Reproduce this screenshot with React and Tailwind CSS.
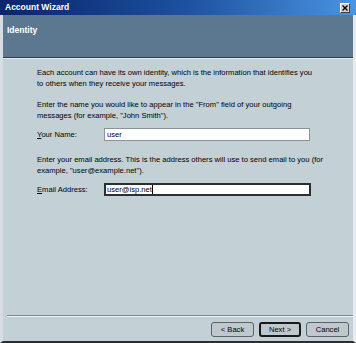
import React from "react";

// Win2000-style "Account Wizard" identity page, scaled down
const font = { fontFamily: '"Liberation Sans", Arial, sans-serif' };

function WizButton({ children, primary }) {
  return (
    <button
      className={`h-[15px] rounded-[3px] bg-[#bfc8cd] text-[7.6px] leading-none text-black ${
        primary ? "w-[42px] border-2 border-[#1a1a1a]" : "w-[43px] border border-[#5a6266]"
      }`}
    >
      {children}
    </button>
  );
}

export default function App() {
  return (
    <div className="w-[356px] h-[343px] bg-[#c3d0d5] flex flex-col border-l-[3px] border-r-[3px] border-b-[2px] border-l-[#d5dde0] border-r-[#e8eced] border-b-[#2a2e30]" style={font}>
      {/* Title bar */}
      <div className="h-[15px] -mx-[3px] flex items-center justify-between pl-[5px] pr-[6px] bg-gradient-to-r from-[#0a246a] via-[#1c4f9c] to-[#4a94e2]">
        <span className="text-white font-bold text-[8.5px] leading-none">Account Wizard</span>
        <div className="w-[10px] h-[10px] bg-[#d4d0c8] border border-t-white border-l-white border-r-[#404040] border-b-[#404040] flex items-center justify-center">
          <svg width="6" height="6" viewBox="0 0 6 6">
            <path d="M0.5 0.5 L5.5 5.5 M5.5 0.5 L0.5 5.5" stroke="#000" strokeWidth="1.4" />
          </svg>
        </div>
      </div>

      {/* Header */}
      <div className="h-[43px] bg-[#5c7891] border-b border-b-[#2f3d48] px-[4px] pt-[11px]">
        <div className="text-white font-bold text-[8.5px] leading-none">Identity</div>
      </div>
      <div className="h-px bg-[#e3eaed]" />

      {/* Body */}
      <div className="flex-1 flex flex-col pl-[34px] pt-[8px] text-[7.6px] leading-[11px] text-black whitespace-nowrap">
        <p>
          Each account can have its own identity, which is the information that identifies you
          <br />
          to others when they receive your messages.
        </p>
        <p className="mt-[10px]">
          Enter the name you would like to appear in the "From" field of your outgoing
          <br />
          messages (for example, "John Smith").
        </p>
        <div className="flex items-center mt-[7px] h-[13px]">
          <label className="w-[67px]">
            <span className="underline">Y</span>our Name:
          </label>
          <div className="w-[206px] h-[13px] bg-white border border-[#8a9397] flex items-center pl-[2px]">
            user
          </div>
        </div>
        <p className="mt-[13px]">
          Enter your email address. This is the address others will use to send email to you (for
          <br />
          example, "user@example.net").
        </p>
        <div className="flex items-center mt-[7px] h-[13px]">
          <label className="w-[67px]">
            <span className="underline">E</span>mail Address:
          </label>
          <div className="w-[207px] h-[13px] bg-white border-2 border-[#2b2f31] flex items-center pl-[1px]">
            user@isp.net<span className="w-px h-[9px] bg-black" />
          </div>
        </div>
      </div>

      {/* Separator */}
      <div className="ml-[4px] h-px bg-[#7f8a90]" />
      <div className="ml-[4px] h-px bg-[#eef2f3]" />

      {/* Buttons */}
      <div className="h-[24px] flex items-start justify-end gap-[5px] pr-[4px] pt-[5px]">
        <WizButton>&lt; Back</WizButton>
        <WizButton primary>Next &gt;</WizButton>
        <WizButton>Cancel</WizButton>
      </div>
    </div>
  );
}
